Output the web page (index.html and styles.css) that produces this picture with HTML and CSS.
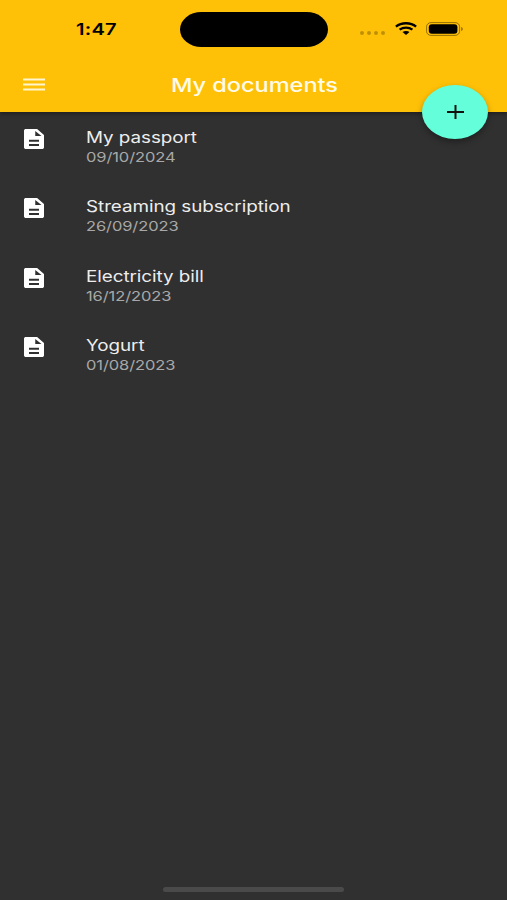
FILE: index.html
```html
<!DOCTYPE html>
<html lang="en">
<head>
<meta charset="utf-8">
<title>My documents</title>
<link rel="stylesheet" href="styles.css">
</head>
<body>
<svg class="defs" width="0" height="0" aria-hidden="true">
  <symbol id="doc" viewBox="4 2 16 20" preserveAspectRatio="none">
    <path fill-rule="evenodd" d="M14.500 2H5.500C4.700 2 4 2.600 4 3.500v17c0 .9.700 1.500 1.500 1.500h13c.8 0 1.500-.6 1.500-1.500V8l-5.500-6zM16 19H8v-2h8v2zm0-4.300H8v-2h8v2zM13 9V4l5 5H13z"/>
  </symbol>
</svg>
<div class="screen">
  <header class="top">
    <div class="status">
      <div class="side"><span class="wide time">1:47</span></div>
      <div class="island"></div>
      <div class="side indicators">
        <div class="dots"><i></i><i></i><i></i><i></i></div>
        <svg class="wifi" viewBox="0 0 22 13" fill="none" stroke="#000" stroke-width="2.300">
          <path d="M.9 4.700C6.400 .1 15.600 .1 21.100 4.700M4.600 7.700c3.700-2.900 9.100-2.900 12.800 0"/>
          <path fill="#000" stroke="none" d="M7.500 10.100c2-1.600 5-1.600 7 0L11 13z"/>
        </svg>
        <svg class="battery" viewBox="0 0 38 14">
          <rect x=".6" y=".6" width="33" height="12.800" rx="4.500" ry="4" fill="none" stroke="#000" stroke-opacity=".42"/>
          <rect x="2.800" y="2.300" width="28.600" height="9.400" rx="3" fill="#000"/>
          <path d="M35.200 5v4c2-.6 2-3.400 0-4z" fill="#000" fill-opacity=".45"/>
        </svg>
      </div>
    </div>
    <div class="bar">
      <svg class="menu" viewBox="0 0 22 13"><path d="M0 1.500h22M0 6.500h22M0 11.500h22" stroke="#fff6cf" stroke-width="2.200"/></svg>
      <h1><span class="wide title">My documents</span></h1>
    </div>
    <button class="fab" aria-label="Add"><svg viewBox="0 0 17 14"><path d="M0 7h17M8.500 0v14" stroke="#111" stroke-width="2"/></svg></button>
  </header>
  <main class="list">
    <div class="row"><svg class="doc"><use href="#doc"/></svg><div class="text"><span class="wide name">My passport</span><span class="wide date">09/10/2024</span></div></div>
    <div class="row"><svg class="doc"><use href="#doc"/></svg><div class="text"><span class="wide name">Streaming subscription</span><span class="wide date">26/09/2023</span></div></div>
    <div class="row"><svg class="doc"><use href="#doc"/></svg><div class="text"><span class="wide name">Electricity bill</span><span class="wide date">16/12/2023</span></div></div>
    <div class="row"><svg class="doc"><use href="#doc"/></svg><div class="text"><span class="wide name">Yogurt</span><span class="wide date">01/08/2023</span></div></div>
  </main>
  <div class="home"></div>
</div>
</body>
</html>
```
FILE: styles.css
```css
* { box-sizing: border-box; }
body { margin: 0; background: #303030; font-family: Inter, "Liberation Sans", sans-serif; }
.defs { position: absolute; }
.screen { width: 507px; height: 900px; display: flex; flex-direction: column; overflow: hidden; background: #303030; }
.wide { display: block; width: max-content; transform: scaleX(1.221); transform-origin: left center; white-space: nowrap; }
.top { position: relative; height: 112px; flex: none; background: #ffc107; box-shadow: 0 2px 4px rgba(0,0,0,.35); }
.status { height: 59px; display: grid; grid-template-columns: 180px 148px 179px; align-items: center; }
.island { height: 35.500px; border-radius: 22px / 18px; background: #000; }
.time { margin: -2px 0 0 76px; font-size: 16.500px; font-weight: 600; line-height: 20px; letter-spacing: .2px; }
.indicators { display: flex; align-items: center; padding-left: 32px; height: 20px; margin-top: -2px; }
.dots { display: flex; gap: 3px; margin-top: 9px; width: 26px; }
.dots i { width: 4px; height: 4px; border-radius: 2px; background: #000; opacity: .25; }
.wifi { width: 22px; height: 13px; margin-left: 9px; }
.battery { width: 38px; height: 14px; margin-left: 9px; }
.bar { height: 51px; display: flex; align-items: center; padding-left: 23px; }
.menu { width: 22px; height: 13px; }
h1 { margin: 0 0 0 125.500px; font-weight: 500; color: #fffbe8; }
.title { font-size: 19.300px; line-height: 24px; letter-spacing: -.03px; }
.fab { position: absolute; left: 422px; top: 85px; width: 66px; height: 54px; border: 0; padding: 0; border-radius: 50%; background: #64ffda; display: flex; align-items: center; justify-content: center; box-shadow: 0 3px 6px rgba(0,0,0,.35); }
.fab svg { width: 17px; height: 14px; }
.list { flex: 1; padding-top: 15px; }
.row { height: 69.400px; display: flex; align-items: flex-start; padding-left: 24px; }
.doc { width: 20px; height: 20px; margin-top: 2px; fill: #fff; }
.text { margin-left: 41.500px; padding-top: 1px; }
.name { font-size: 15.450px; line-height: 20px; letter-spacing: -.05px; color: #ededed; }
.date { font-size: 13.500px; line-height: 19px; letter-spacing: -.08px; color: #a8a8a8; }
.home { align-self: center; width: 181px; height: 5px; margin: 0 0 8px; border-radius: 3px; background: #4a4a4a; flex: none; }
```
